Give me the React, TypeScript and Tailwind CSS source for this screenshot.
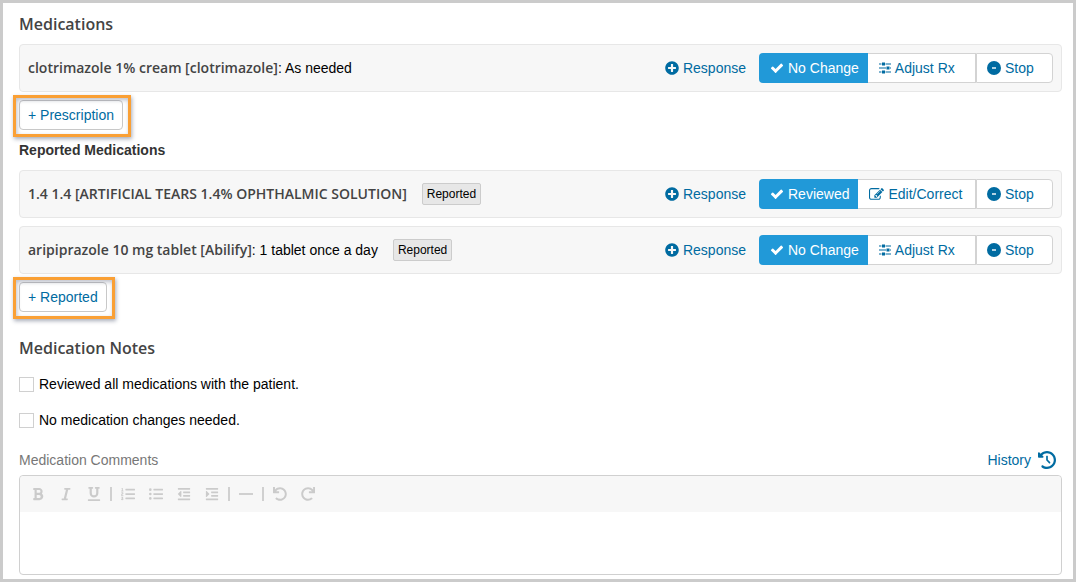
import React, { useState } from "react";
import {
    FaBold,
    FaIndent,
    FaItalic,
    FaListOl,
    FaListUl,
    FaOutdent,
    FaUnderline,
    FaUndo,
    FaRedo,
    FaPlusCircle,
} from "react-icons/fa";
import { FaClockRotateLeft } from "react-icons/fa6";

type Medication = {
    name: string;
    directions?: string;
    reported?: boolean;
    confirm: string;
    change: "adjust" | "edit";
};

const prescribed: Medication[] = [
    { name: "clotrimazole 1% cream [clotrimazole]", directions: "As needed", confirm: "No Change", change: "adjust" },
];

const reported: Medication[] = [
    { name: "1.4 1.4 [ARTIFICIAL TEARS 1.4% OPHTHALMIC SOLUTION]", reported: true, confirm: "Reviewed", change: "edit" },
    { name: "aripiprazole 10 mg tablet [Abilify]", directions: "1 tablet once a day", reported: true, confirm: "No Change", change: "adjust" },
];

const CheckIcon: React.FC = () => (
    <svg viewBox="0 0 1792 1792" className="size-[14px]" fill="currentColor" aria-hidden="true">
        <path d="M1671 566q0 40-28 68l-724 724-136 136q-28 28-68 28t-68-28l-136-136-362-362q-28-28-28-68t28-68l136-136q28-28 68-28t68 28l294 295 656-657q28-28 68-28t68 28l136 136q28 28 28 68z" />
    </svg>
);

const EditIcon: React.FC = () => (
    <svg viewBox="0 0 1792 1792" className="size-[15px]" fill="currentColor" aria-hidden="true">
        <path d="M888 1184l116-116-152-152-116 116v56h96v96h56zm440-720q-16-16-33 1l-350 350q-17 17-1 33t33-1l350-350q17-17 1-33zm80 594v190q0 119-84.5 203.5t-203.5 84.5h-832q-119 0-203.5-84.5t-84.5-203.5v-832q0-119 84.5-203.5t203.5-84.5h832q63 0 117 25 15 7 18 23 3 17-9 29l-49 49q-14 14-32 8-23-6-45-6h-832q-66 0-113 47t-47 113v832q0 66 47 113t113 47h832q66 0 113-47t47-113v-126q0-13 9-22l64-64q15-15 35-7t20 29zm-96-738l288 288-672 672h-288v-288zm444 132l-92 92-288-288 92-92q28-28 68-28t68 28l152 152q28 28 28 68t-28 68z" />
    </svg>
);

const SlidersIcon: React.FC = () => (
    <svg viewBox="0 0 12 12" className="size-3" fill="currentColor" aria-hidden="true">
        <path d="M0 1.5h2.5v1H0zM6.5 1.5H12v1H6.5zM3 .5h3v3H3zM0 5.5h7v1H0zM11 5.5h1v1h-1zM7.5 4.5h3v3h-3zM0 9.5h2.5v1H0zM6.5 9.5H12v1H6.5zM3 8.5h3v3H3z" />
    </svg>
);

const StopIcon: React.FC = () => (
    <svg viewBox="0 0 14 14" className="size-[14px]" aria-hidden="true">
        <circle cx="7" cy="7" r="7" fill="currentColor" />
        <path d="M5 7h4" stroke="#fff" strokeWidth="1.4" />
    </svg>
);

const Heading: React.FC<{ children: React.ReactNode }> = ({ children }) => (
    <h2 className="font-['Open_Sans',sans-serif] text-base leading-6 font-semibold text-[#444]">{children}</h2>
);

const MedicationRow: React.FC<{ med: Medication }> = ({ med }) => (
    <li className="flex min-h-12 items-center justify-between rounded-sm border border-[#e7e7e7] bg-[#f7f7f7] px-2">
        <div className="flex items-center">
            <p className="text-black">
                <span className="font-['Open_Sans',sans-serif] font-semibold text-[#444]">{med.name}</span>
                {med.directions && <>: {med.directions}</>}
            </p>
            {med.reported && (
                <span className="ml-[15px] rounded-xs border border-[#ccc] bg-[#e7e7e7] px-1 text-xs leading-5 text-black">Reported</span>
            )}
        </div>
        <div className="flex items-center text-[#006ba1]">
            <button type="button" className="mr-[13px] flex items-center gap-1">
                <FaPlusCircle />
                Response
            </button>
            <div className="flex h-[30px] w-[294px]">
                <button type="button" className="flex items-center gap-1 rounded-l-sm bg-[#2199d8] pr-[9px] pl-[11px] text-white">
                    <CheckIcon />
                    {med.confirm}
                </button>
                <button type="button" className="flex flex-1 items-center gap-1 border-y border-r border-[#d3d3d3] bg-white pl-[11px]">
                    {med.change === "adjust" ? <SlidersIcon /> : <EditIcon />}
                    {med.change === "adjust" ? "Adjust Rx" : "Edit/Correct"}
                </button>
                <button type="button" className="flex w-[77px] items-center gap-1 rounded-r-sm border border-[#d3d3d3] bg-white pl-[10px]">
                    <StopIcon />
                    Stop
                </button>
            </div>
        </div>
    </li>
);

/* add button with the orange callout frame around it */
const AddButton: React.FC<{ label: string }> = ({ label }) => (
    <div className="relative mt-2 w-fit">
        <button type="button" className="h-[30px] rounded-sm border border-[#c8c8c8] bg-white px-2 text-[#006ba1]">
            + {label}
        </button>
        <span className="pointer-events-none absolute -top-[5px] -right-2 -bottom-[7px] -left-[6px] border-3 border-[#faa035] shadow-[1px_2px_4px_rgba(60,70,100,0.45),inset_1px_2px_4px_rgba(60,70,100,0.35)]" />
    </div>
);

const Divider: React.FC = () => (
    <span className="flex w-[6px] justify-center">
        <span className="h-[14px] w-0.5 bg-[#d0d0d0]" />
    </span>
);

const Tool: React.FC<{ label: string; children: React.ReactNode }> = ({ label, children }) => (
    <button type="button" aria-label={label} className="flex size-7 items-center justify-center">
        {children}
    </button>
);

const App: React.FC = () => {
    const [allReviewed, setAllReviewed] = useState(false);
    const [noChanges, setNoChanges] = useState(false);
    const [comments, setComments] = useState("");
    const box = "size-[15px] appearance-none border border-[#d0d0d0] bg-white checked:bg-[#2199d8]";

    return (
        <main className="border-3 border-[#cbcbcb] bg-white pt-[9px] pr-[11px] pb-1 pl-4 font-['Liberation_Sans',Arial,sans-serif] text-sm leading-5">
            <Heading>Medications</Heading>
            <ul className="mt-2 flex flex-col gap-2">
                {prescribed.map((med) => <MedicationRow key={med.name} med={med} />)}
            </ul>
            <AddButton label="Prescription" />

            <h3 className="my-[10px] font-bold text-[#333]">Reported Medications</h3>
            <ul className="flex flex-col gap-2">
                {reported.map((med) => <MedicationRow key={med.name} med={med} />)}
            </ul>
            <AddButton label="Reported" />

            <div className="mt-6">
                <Heading>Medication Notes</Heading>
            </div>
            <div className="mt-[14px] flex flex-col items-start gap-4 text-black">
                <label className="flex items-center gap-[5px]">
                    <input type="checkbox" className={box} checked={allReviewed} onChange={() => setAllReviewed(!allReviewed)} />
                    Reviewed all medications with the patient.
                </label>
                <label className="flex items-center gap-[5px]">
                    <input type="checkbox" className={box} checked={noChanges} onChange={() => setNoChanges(!noChanges)} />
                    No medication changes needed.
                </label>
            </div>

            <div className="mt-5 flex items-center justify-between">
                <label htmlFor="comments" className="text-[#777]">Medication Comments</label>
                <a href="#history" className="mr-[6px] flex items-center gap-[7px] text-[#006ba1]">
                    History
                    <FaClockRotateLeft className="size-[18px]" />
                </a>
            </div>
            <div className="mt-[5px] rounded-sm border border-[#d0d0d0]">
                <div className="flex h-9 items-center rounded-t-sm bg-[#f7f7f7] px-1 text-[#cbcbcb]">
                    <Tool label="Bold"><FaBold /></Tool>
                    <Tool label="Italic"><FaItalic /></Tool>
                    <Tool label="Underline"><FaUnderline /></Tool>
                    <Divider />
                    <Tool label="Numbered list"><FaListOl /></Tool>
                    <Tool label="Bulleted list"><FaListUl /></Tool>
                    <Tool label="Outdent"><FaOutdent /></Tool>
                    <Tool label="Indent"><FaIndent /></Tool>
                    <Divider />
                    <Tool label="Horizontal line"><span className="h-0.5 w-[14px] bg-[#d0d0d0]" /></Tool>
                    <Divider />
                    <Tool label="Undo"><FaUndo /></Tool>
                    <Tool label="Redo"><FaRedo /></Tool>
                </div>
                <textarea
                    id="comments"
                    className="block h-[62px] w-full resize-none rounded-b-sm px-2 py-1 outline-none"
                    value={comments}
                    onChange={(e) => setComments(e.target.value)}
                />
            </div>
        </main>
    );
};

export default App;
